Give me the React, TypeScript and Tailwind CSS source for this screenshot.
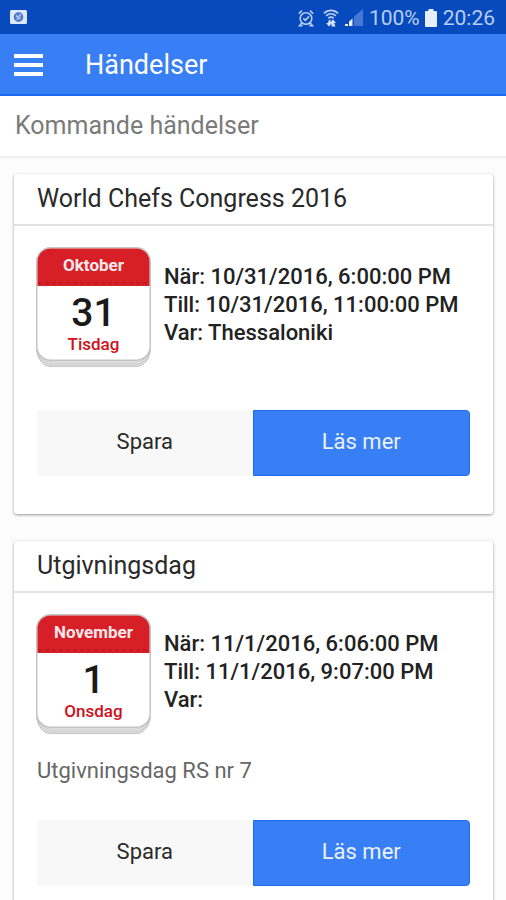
import React from 'react';

interface EventItem {
  id: number;
  title: string;
  month: string;
  day: number;
  weekday: string;
  from: string;
  to: string;
  place: string;
  description?: string;
}

const events: EventItem[] = [
  {
    id: 1,
    title: 'World Chefs Congress 2016',
    month: 'Oktober',
    day: 31,
    weekday: 'Tisdag',
    from: '10/31/2016, 6:00:00 PM',
    to: '10/31/2016, 11:00:00 PM',
    place: 'Thessaloniki',
  },
  {
    id: 2,
    title: 'Utgivningsdag',
    month: 'November',
    day: 1,
    weekday: 'Onsdag',
    from: '11/1/2016, 6:06:00 PM',
    to: '11/1/2016, 9:07:00 PM',
    place: '',
    description: 'Utgivningsdag RS nr 7',
  },
];

const CameraIcon = () => (
  <svg className="h-[14px] w-[17px]" viewBox="0 0 17 14">
    <rect width="17" height="14" rx="1.5" fill="#dfe8fa" />
    <circle cx="8.5" cy="7" r="4.6" fill="#5b82d4" />
    <path d="M6 5.5 8 7.5 11 4.5M6.5 9.5l4-1.5" stroke="#c3d3f3" strokeWidth="1.1" fill="none" />
    <circle cx="8.5" cy="7" r="4.2" stroke="#3e69c8" strokeWidth="1" fill="none" />
  </svg>
);

const AlarmIcon = () => (
  <svg className="h-[18px] w-4" viewBox="0 0 16 18" fill="none" stroke="#b9cdf4" strokeWidth="1.6">
    <circle cx="8" cy="9.5" r="5.8" />
    <path d="M5.3 9.3 7.4 11.3 11 7.4" />
    <path d="M.8 4.6 4 1.6M15.2 4.6 12 1.6M3.8 14 1.6 16.6h3M12.2 14l2.2 2.6h-3" />
  </svg>
);

const WifiIcon = () => (
  <svg className="h-[18px] w-4" viewBox="0 0 16 18" fill="none" stroke="#b9cdf4">
    <path d="M1 4.4C5 .4 11 .4 15 4.4M3.2 6.9c2.8-2.6 6.8-2.6 9.6 0M5.4 9.2c1.6-1.4 3.6-1.4 5.2 0" strokeWidth="1.8" />
    <path d="M7.5 10.5v3.5H9L6 17.5 3 14h1.8l1.2-3zM8.5 17.5V14H7l3-3.8 3 3.8h-1.8l1.3 3.5z" fill="#d3e0f9" stroke="none" />
  </svg>
);

const SignalIcon = () => (
  <svg className="h-[18px] w-[18px]" viewBox="0 0 18 18">
    <path d="M0 15h3v2H0zM4 12.5 7.5 9.5V17H4z" fill="#e6eefc" />
    <path d="M9 7.5 18 0v17H9z" fill="#4677d3" />
  </svg>
);

const BatteryIcon = () => (
  <svg className="h-[18px] w-3" viewBox="0 0 12 18">
    <path d="M3.5 0h5v2H11a1 1 0 0 1 1 1v14a1 1 0 0 1-1 1H1a1 1 0 0 1-1-1V3a1 1 0 0 1 1-1h2.5z" fill="#e8effc" />
  </svg>
);

const StatusBar = () => (
  <div className="flex h-[34px] items-center justify-between bg-[#074abd] pl-[10px] pr-[11px] text-[#b9cdf4]">
    <CameraIcon />
    <div className="flex items-center pt-[2px] text-[21px] leading-[30px]">
      <AlarmIcon />
      <span className="ml-[9px]"><WifiIcon /></span>
      <span className="ml-[6px]"><SignalIcon /></span>
      <span className="ml-[6px]">100%</span>
      <span className="ml-[5px]"><BatteryIcon /></span>
      <span className="ml-[6px]">20:26</span>
    </div>
  </div>
);

const CalendarIcon: React.FC<{ event: EventItem }> = ({ event }) => (
  <div className="relative h-[120px] w-[115px] shrink-0 text-center">
    <svg className="absolute inset-0 h-full w-full" viewBox="0 0 115 120">
      <path d="M.75 104C2 112 7 119.25 14 119.25h87c7 0 12-7.25 13.25-15.25z" fill="#e4e4e4" stroke="#b9b9b9" />
      <path d="M.75 103C3 112 8 117 15 117h85c7 0 12-5 14.25-14z" fill="#ececec" stroke="#c4c4c4" />
      <path d="M.75 102C3 110 8 115 15 115h85c7 0 12-5 14.25-13z" fill="#f6f6f6" stroke="#c8c8c8" />
      <rect x=".75" y=".75" width="113.5" height="112.5" rx="14" fill="#fff" stroke="#c4c4c4" strokeWidth="1.5" />
      <path d="M1.5 39V14.5a13 13 0 0 1 13-13h86a13 13 0 0 1 13 13V39z" fill="#d71f28" />
      <path d="M2 36h111" stroke="#b3121b" strokeDasharray="4 3" />
    </svg>
    <div className="relative">
      <div className="h-[39px] text-[17px] leading-[36px] font-bold text-[#fbe9ea]">{event.month}</div>
      <div className="h-[46px] text-[39px] leading-[54px] font-medium text-[#1a1a1a]">{event.day}</div>
      <div className="text-[17px] leading-[24px] font-medium text-[#d0101a]">{event.weekday}</div>
    </div>
  </div>
);

const EventCard: React.FC<{ event: EventItem }> = ({ event }) => (
  <article className="rounded-[3px] bg-white shadow-[0_1px_3px_rgba(0,0,0,0.4)]">
    <h2 className="border-b-2 border-[#e2e2e2] px-[23px] text-[25px] leading-[50px] text-[#2a2a2a]">
      {event.title}
    </h2>
    <div className="px-[22px] pt-[21px] pb-[38px]">
      <div className="flex items-center gap-[13px]">
        <CalendarIcon event={event} />
        <div className="pb-[5px] text-[22px] leading-[28px] font-medium text-[#222]">
          <p>När: {event.from}</p>
          <p>Till: {event.to}</p>
          <p>Var: {event.place}</p>
        </div>
      </div>
      {event.description && (
        <p className="mt-[22px] px-px text-[22px] leading-[30px] text-[#666]">{event.description}</p>
      )}
      <div className={event.description ? 'mt-[34px] flex px-px' : 'mt-[43px] flex px-px'}>
        <button type="button" className="h-[66px] flex-1 rounded-l-[4px] bg-[#f8f8f8] pb-1 text-[22px] text-[#2a2a2a]">
          Spara
        </button>
        <button type="button" className="h-[66px] flex-1 rounded-r-[4px] border border-[#1a6cf0] bg-[#387ef5] pb-1 text-[22px] text-[#e9f1ff]">
          Läs mer
        </button>
      </div>
    </div>
  </article>
);

const App: React.FC = () => {
  return (
    <div className="min-h-screen bg-[#fcfcfc] font-[Roboto,sans-serif]">
      <StatusBar />
      <header className="flex h-[62px] items-center border-b-2 border-[#1a6cf0] bg-[#387ef5] px-[14px] pt-[2px]">
        <button type="button" aria-label="Meny" className="flex w-[29px] flex-col gap-[5px]">
          <span className="h-1 w-full bg-white" />
          <span className="h-1 w-full bg-white" />
          <span className="h-1 w-full bg-white" />
        </button>
        <h1 className="ml-[42px] text-[27px] leading-[32px] text-white">Händelser</h1>
      </header>
      <div className="border-b-2 border-[#efefef] bg-white px-[15px] text-[25px] leading-[60px] text-[#7a7a7a]">
        Kommande händelser
      </div>
      <main className="flex flex-col gap-[27px] px-[14px] pt-4 pr-[13px]">
        {events.map(event => (
          <EventCard key={event.id} event={event} />
        ))}
      </main>
    </div>
  );
};

export default App;
